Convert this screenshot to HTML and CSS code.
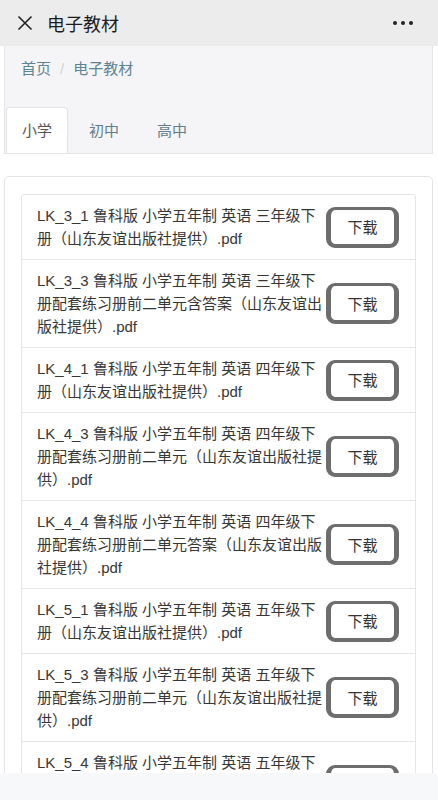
FILE: index.html
```html
<!DOCTYPE html>
<html lang="zh-CN">
<head>
<meta charset="utf-8">
<title>电子教材</title>
<link rel="stylesheet" href="styles.css">
</head>
<body>
<header class="topbar">
  <svg class="close-icon" width="16" height="16" viewBox="0 0 16 16"><path d="M1.5 1.5 L14.5 14.5 M14.5 1.5 L1.5 14.5" stroke="#222" stroke-width="1.6" fill="none"/></svg>
  <span class="title">电子教材</span>
  <span class="dots"><i></i><i></i><i></i></span>
</header>
<main class="page">
  <section class="panel">
    <nav class="crumbs"><span>首页</span><span class="sep">/</span><span>电子教材</span></nav>
    <ul class="tabs">
      <li class="tab active">小学</li>
      <li class="tab">初中</li>
      <li class="tab">高中</li>
    </ul>
  </section>
  <section class="card">
    <ul class="list">
      <li class="row"><span class="name">LK_3_1 鲁科版 小学五年制 英语 三年级下册（山东友谊出版社提供）.pdf</span><span class="btn">下载</span></li>
      <li class="row"><span class="name">LK_3_3 鲁科版 小学五年制 英语 三年级下册配套练习册前二单元含答案（山东友谊出版社提供）.pdf</span><span class="btn">下载</span></li>
      <li class="row"><span class="name">LK_4_1 鲁科版 小学五年制 英语 四年级下册（山东友谊出版社提供）.pdf</span><span class="btn">下载</span></li>
      <li class="row"><span class="name">LK_4_3 鲁科版 小学五年制 英语 四年级下册配套练习册前二单元（山东友谊出版社提供）.pdf</span><span class="btn">下载</span></li>
      <li class="row"><span class="name">LK_4_4 鲁科版 小学五年制 英语 四年级下册配套练习册前二单元答案（山东友谊出版社提供）.pdf</span><span class="btn">下载</span></li>
      <li class="row"><span class="name">LK_5_1 鲁科版 小学五年制 英语 五年级下册（山东友谊出版社提供）.pdf</span><span class="btn">下载</span></li>
      <li class="row"><span class="name">LK_5_3 鲁科版 小学五年制 英语 五年级下册配套练习册前二单元（山东友谊出版社提供）.pdf</span><span class="btn">下载</span></li>
      <li class="row"><span class="name">LK_5_4 鲁科版 小学五年制 英语 五年级下册配套练习册前二单元答案（山东友谊出版社提供）.pdf</span><span class="btn">下载</span></li>
    </ul>
  </section>
</main>
<div class="bottombar"></div>
</body>
</html>
```
FILE: styles.css
```css
* { box-sizing: border-box; }
html, body { margin: 0; padding: 0; }
body {
  font-family: "Liberation Sans", "Noto Sans CJK SC", sans-serif;
  background: #ffffff;
  color: #333;
  width: 438px;
  overflow: hidden;
}
ul { list-style: none; margin: 0; padding: 0; }

.topbar {
  height: 46px;
  background: #ececec;
  display: flex;
  align-items: center;
  padding: 0 25px 0 17px;
}
.close-icon { flex: 0 0 auto; }
.title {
  margin-left: 14px;
  font-size: 18px;
  color: #1c1c1c;
  flex: 1;
}
.dots { display: flex; gap: 4px; }
.dots i {
  display: block;
  width: 4px;
  height: 4px;
  border-radius: 50%;
  background: #222;
}

.page {
  padding: 0 5px 0 4px;
}
.panel {
  background: #f5f5f7;
  border: 1px solid #e6e6e8;
  border-top: none;
}
.crumbs {
  font-size: 15px;
  color: #5b8494;
  padding: 11px 0 0 16px;
  height: 61px;
}
.crumbs .sep { color: #d0d3d6; margin: 0 9px; }
.tabs {
  display: flex;
  padding-left: 1px;
  height: 46px;
}
.tab {
  font-size: 15px;
  color: #5f7d8b;
  padding: 12px 17px 0;
  margin-right: 4px;
  height: 46px;
}
.tab.active {
  background: #fff;
  color: #555;
  border: 1px solid #e2e3e5;
  border-bottom: none;
  border-radius: 4px 4px 0 0;
  padding: 11px 15px 0;
}

.card {
  margin-top: 22px;
  border: 1px solid #e4e4e6;
  border-radius: 5px;
  background: #fff;
  padding: 17px 16px 17px 16px;
}
.list {
  border: 1px solid #e6e6e6;
  border-radius: 3px;
}
.row {
  display: flex;
  align-items: center;
  padding: 9px 17px 9px 15px;
  border-top: 1px solid #e6e6e6;
}
.row:first-child { border-top: none; }
.name {
  flex: 0 0 287px;
  font-size: 15px;
  line-height: 23px;
  color: #363636;
}
.btn {
  margin-left: 2px;
  width: 73px;
  height: 41px;
  flex: 0 0 73px;
  border-style: solid;
  border-color: #6d6d6d;
  border-width: 3px 5px 4px 5px;
  border-radius: 9px;
  display: flex;
  align-items: center;
  justify-content: center;
  font-size: 15px;
  color: #333;
  background: #fff;
}

.bottombar {
  position: fixed;
  left: 0;
  right: 0;
  bottom: 0;
  height: 27px;
  background: #f6f8fa;
}
```
